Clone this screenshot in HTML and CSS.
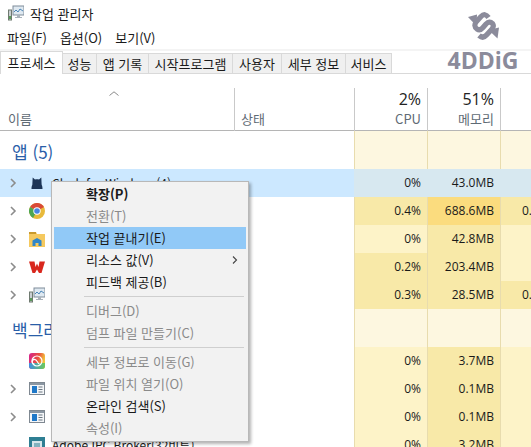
FILE: index.html
```html
<!DOCTYPE html>
<html lang="ko">
<head>
  <meta charset="UTF-8" />
  <meta name="viewport" content="width=device-width, initial-scale=1.0" />
  <title>작업 관리자</title>
  <link rel="stylesheet" href="styles.css">
</head>
<body>
  <svg width="0" height="0" class="defs">
    <symbol id="taskmgr" viewBox="0 0 16 16">
      <rect x="5" y="1" width="11" height="9" fill="#dfe9f1" stroke="#7f8c99"/>
      <path d="M6 7l2-2 2 2 2-3 3 2" fill="none" stroke="#4b86b8"/>
      <path d="M9 10h3v2h2v1H7v-1h2z" fill="#a9b2ba"/>
      <rect x="0.5" y="5" width="3" height="10" fill="#c9ced2" stroke="#6f7a70"/>
      <rect x="1" y="11" width="2" height="3" fill="#5a9a5a"/>
    </symbol>
    <symbol id="winapp" viewBox="0 0 16 14">
      <rect x="0.5" y="0.5" width="15" height="12" fill="#f4f6f8" stroke="#7f8891"/>
      <rect x="1" y="1" width="14" height="2" fill="#8b97a3"/>
      <rect x="3" y="4" width="5" height="7" fill="#1f78c8"/>
      <path d="M9.500 5h4M9.500 7.500h4M9.500 10h4" stroke="#6b7680"/>
    </symbol>
    <symbol id="chevron" viewBox="0 0 8 10">
      <path d="M2 1l4 4-4 4" fill="none" stroke="#8c8c8c" stroke-width="1.600"/>
    </symbol>
  </svg>

  <div class="window">
    <div class="titlebar">
      <svg class="title-icon"><use href="#taskmgr"/></svg>
      <span>작업 관리자</span>
    </div>

    <div class="menubar">
      <span>파일(F)</span>
      <span>옵션(O)</span>
      <span>보기(V)</span>
    </div>

    <div class="tabs">
      <div class="tab active">프로세스</div>
      <div class="tab">성능</div>
      <div class="tab">앱 기록</div>
      <div class="tab">시작프로그램</div>
      <div class="tab">사용자</div>
      <div class="tab">세부 정보</div>
      <div class="tab">서비스</div>
    </div>

    <div class="row head">
      <div class="col name">
        <svg class="sort" viewBox="0 0 10 5"><path d="M0.500 4.500L5 0.800l4.500 3.700" fill="none" stroke="#8a8a8a"/></svg>
        <span class="head-label">이름</span>
      </div>
      <div class="col status"><span class="head-label">상태</span></div>
      <div class="col num"><span class="pct">2%</span><span class="head-label">CPU</span></div>
      <div class="col num"><span class="pct">51%</span><span class="head-label">메모리</span></div>
      <div class="col last"></div>
    </div>

    <div class="row group">
      <div class="col name group-title">앱 (5)</div>
      <div class="col status"></div>
      <div class="col num h0"></div>
      <div class="col num h0"></div>
      <div class="col last h0"></div>
    </div>

    <div class="row item selected">
      <div class="col name">
        <svg class="arrow"><use href="#chevron"/></svg>
        <svg class="icon" viewBox="0 0 16 16"><path d="M2.500 14c0-2 .2-3 .8-4 .2-2 .2-5 .4-7.500L6 4.500c1.300-.3 2.700-.3 4 0l2.300-2c.2 2.500.2 5.500.4 7.500.6 1 .8 2 .8 4z" fill="#1d3557"/></svg>
        <span class="label">Clash for Windows(4)</span>
      </div>
      <div class="col status"></div>
      <div class="col num">0%</div>
      <div class="col num">43.0MB</div>
      <div class="col last"></div>
    </div>

    <div class="row item">
      <div class="col name">
        <svg class="arrow"><use href="#chevron"/></svg>
        <svg class="icon" viewBox="0 0 16 16">
          <circle cx="8" cy="8" r="8" fill="#e8b93a"/>
          <path d="M8 8L1.100 4A8 8 0 0 1 15 4z" fill="#d94a38"/>
          <path d="M8 8l-4 7A8 8 0 0 1 1.100 4z" fill="#4ea651"/>
          <circle cx="8" cy="8" r="3.700" fill="#fff"/>
          <circle cx="8" cy="8" r="2.800" fill="#4a86e0"/>
        </svg>
      </div>
      <div class="col status"></div>
      <div class="col num h2">0.4%</div>
      <div class="col num h4">688.6MB</div>
      <div class="col last h2">0.</div>
    </div>

    <div class="row item">
      <div class="col name">
        <svg class="arrow"><use href="#chevron"/></svg>
        <svg class="icon" viewBox="0 0 16 16">
          <path d="M0 1h7l1 2h8v13H0z" fill="#f5c95f"/>
          <rect y="1" width="7" height="2" fill="#c99a2e"/>
          <path d="M3.500 15V9.500L8 7l4.500 2.500V15h-3v-3h-3v3z" fill="#2f86c9"/>
        </svg>
      </div>
      <div class="col status"></div>
      <div class="col num h1">0%</div>
      <div class="col num h2">42.8MB</div>
      <div class="col last h1"></div>
    </div>

    <div class="row item">
      <div class="col name">
        <svg class="arrow"><use href="#chevron"/></svg>
        <svg class="icon" viewBox="0 0 16 16"><path d="M0 2.500h5.500L6.500 8 8 4.500 9.500 8l1-5.500H16L12.500 14H10L8 10.500 6 14H3.500z" fill="#d9281e"/></svg>
      </div>
      <div class="col status"></div>
      <div class="col num h2">0.2%</div>
      <div class="col num h2">203.4MB</div>
      <div class="col last h1"></div>
    </div>

    <div class="row item">
      <div class="col name">
        <svg class="arrow"><use href="#chevron"/></svg>
        <svg class="icon"><use href="#taskmgr"/></svg>
      </div>
      <div class="col status"></div>
      <div class="col num h2">0.3%</div>
      <div class="col num h2">28.5MB</div>
      <div class="col last h2">0.</div>
    </div>

    <div class="row group">
      <div class="col name group-title">백그라운드 프로세스</div>
      <div class="col status"></div>
      <div class="col num h0"></div>
      <div class="col num h0"></div>
      <div class="col last h0"></div>
    </div>

    <div class="row item">
      <div class="col name">
        <span class="arrow"></span>
        <svg class="icon" viewBox="0 0 16 16">
          <defs>
            <linearGradient id="ccA" x1="0" y1="0" x2="1" y2="0.300">
              <stop offset="0" stop-color="#d4208f"/>
              <stop offset="0.600" stop-color="#e9503f"/>
              <stop offset="1" stop-color="#f2c53a"/>
            </linearGradient>
            <linearGradient id="ccB" x1="0" y1="0" x2="1" y2="0">
              <stop offset="0" stop-color="#3f8ee0"/>
              <stop offset="1" stop-color="#6cc95a"/>
            </linearGradient>
          </defs>
          <rect width="16" height="16" rx="3" fill="url(#ccA)"/>
          <path d="M0 10h16v3a3 3 0 0 1-3 3H3a3 3 0 0 1-3-3z" fill="url(#ccB)"/>
          <circle cx="8" cy="8" r="5" fill="none" stroke="#fff" stroke-width="1.200"/>
          <path d="M5.500 11a2.300 2.300 0 0 1 0-4.600c1.500 0 2.200 1.200 2.700 2.200s1.200 2.400 2.300 2.400" fill="none" stroke="#fff" stroke-width="1.200"/>
        </svg>
      </div>
      <div class="col status"></div>
      <div class="col num h1">0%</div>
      <div class="col num h2">3.7MB</div>
      <div class="col last h1"></div>
    </div>

    <div class="row item">
      <div class="col name">
        <svg class="arrow"><use href="#chevron"/></svg>
        <svg class="icon"><use href="#winapp"/></svg>
      </div>
      <div class="col status"></div>
      <div class="col num h1">0%</div>
      <div class="col num h2">0.1MB</div>
      <div class="col last h1"></div>
    </div>

    <div class="row item">
      <div class="col name">
        <svg class="arrow"><use href="#chevron"/></svg>
        <svg class="icon"><use href="#winapp"/></svg>
      </div>
      <div class="col status"></div>
      <div class="col num h1">0%</div>
      <div class="col num h2">0.1MB</div>
      <div class="col last h1"></div>
    </div>

    <div class="row item">
      <div class="col name">
        <span class="arrow"></span>
        <svg class="icon" viewBox="0 0 16 16">
          <rect width="16" height="16" fill="#2f7f93"/>
          <path d="M3 4h10v9H3z" fill="#d5e6ea"/>
          <path d="M5 7h6M5 9h6M5 11h6" stroke="#2f7f93"/>
        </svg>
        <span class="label">Adobe IPC Broker(32비트)</span>
      </div>
      <div class="col status"></div>
      <div class="col num h1">0%</div>
      <div class="col num h2">3.2MB</div>
      <div class="col last h1"></div>
    </div>
  </div>

  <div class="logo">
    <svg class="logo-mark" viewBox="0 0 32 30">
      <path d="M21.500 6.500Q18 1.500 14 5.500L9.500 10.500Q6 15 10 18Q13 20 16 16.500L19 13Q22.500 9.500 25.500 12.500Q27.500 15.500 24.500 18.500L19.500 24Q16 28 12 24.500" fill="none" stroke="#8b8b9b" stroke-width="5.200"/>
      <path d="M1 6 10 3.500 9.500 15z" fill="#8b8b9b"/>
      <path d="M32 16.500 30.500 27.500 21.500 19z" fill="#8b8b9b"/>
    </svg>
    <div class="logo-text">4DDiG</div>
  </div>

  <div class="menu">
    <div class="menu-item strong">확장(P)</div>
    <div class="menu-item off">전환(T)</div>
    <div class="menu-item hover">작업 끝내기(E)</div>
    <div class="menu-item">리소스 값(V)
      <svg class="submenu" viewBox="0 0 6 8"><path d="M1 .5 4.500 4 1 7.500" fill="none" stroke="#444" stroke-width="1.100"/></svg>
    </div>
    <div class="menu-item">피드백 제공(B)</div>
    <div class="menu-sep"></div>
    <div class="menu-item off">디버그(D)</div>
    <div class="menu-item off">덤프 파일 만들기(C)</div>
    <div class="menu-sep"></div>
    <div class="menu-item off">세부 정보로 이동(G)</div>
    <div class="menu-item off">파일 위치 열기(O)</div>
    <div class="menu-item">온라인 검색(S)</div>
    <div class="menu-item off">속성(I)</div>
  </div>
</body>
</html>
```

FILE: styles.css
```css
html, body {
  margin: 0;
  height: 447px;
  overflow: hidden;
}

body {
  position: relative;
  background: white;
  color: #1a1a1a;
  font-family: "Noto Sans CJK KR", "Open Sans", sans-serif;
  font-size: 13px;
}

.defs {
  position: absolute;
}

.window {
  width: 531px;
  overflow: hidden;
}

.titlebar {
  height: 26px;
  display: flex;
  align-items: center;
  gap: 6px;
  padding-left: 8px;
}

.title-icon {
  width: 16px;
  height: 16px;
}

.menubar {
  height: 25px;
  display: flex;
  align-items: center;
  gap: 13px;
  padding-left: 7px;
  border-bottom: 2px solid #f4f4f4;
  box-sizing: border-box;
}

.tabs {
  height: 22px;
  display: grid;
  grid-template-columns: 63px 34px 52px 84px 49px 64px 46px;
  justify-content: start;
  align-items: end;
  border-bottom: 1px solid #d9d9d9;
}

.tab {
  height: 20px;
  line-height: 20px;
  box-sizing: border-box;
  text-align: center;
  background: #f0f0f0;
  border: 1px solid #d9d9d9;
  border-bottom: none;
  border-left: none;
}

.tab.active {
  height: 23px;
  line-height: 21px;
  background: white;
  border-left: 1px solid #d9d9d9;
  margin-bottom: -1px;
  position: relative;
}

.row {
  display: grid;
  grid-template-columns: 234px 120px 73px 73px 31px;
}

.col {
  box-sizing: border-box;
}

.col.num, .col.last {
  border-left: 1px solid #e8dcae;
}

.col.num {
  text-align: right;
  padding-right: 6px;
  font-family: "Open Sans", sans-serif;
  font-size: 12px;
}

.head {
  height: 57px;
  border-bottom: 1px solid #b5b5b5;
  box-sizing: border-box;
}

.head .col {
  display: flex;
  flex-direction: column;
  justify-content: flex-end;
  padding-bottom: 3px;
  border-left: none;
  position: relative;
}

.head .col.status, .head .col.num, .head .col.last {
  border-left: 1px solid #c9c9c9;
  margin-top: 14px;
}

.head .col.num {
  align-items: flex-end;
}

.head .col.status {
  padding-left: 6px;
}

.head .name {
  padding-left: 8px;
}

.sort {
  position: absolute;
  left: 109px;
  top: 17px;
  width: 10px;
  height: 5px;
}

.head-label {
  color: #5f6b75;
  font-family: "Noto Sans CJK KR", sans-serif;
  font-size: 13px;
  line-height: 18px;
}

.pct {
  font-size: 16px;
  line-height: 22px;
  color: #222;
}

.group {
  height: 38px;
}

.group-title {
  color: #2a5ea8;
  font-size: 17px;
  line-height: 34px;
  padding: 4px 0 0 12px;
  white-space: nowrap;
}

.item {
  height: 28px;
}

.item .col {
  line-height: 28px;
}

.item .name {
  display: flex;
  align-items: center;
  white-space: nowrap;
}

.arrow {
  width: 8px;
  height: 10px;
  margin-left: 9px;
  flex: none;
}

.icon {
  width: 16px;
  height: 16px;
  margin-left: 12px;
  flex: none;
}

.label {
  margin-left: 7px;
  font-size: 12px;
}

.selected {
  background: #cce8ff;
}

.selected .col.num, .selected .col.last {
  background: #d7e8f0;
  border-left-color: #d7e8f0;
}

.h0 { background: #fdf7e0; }
.h1 { background: #fdf3c8; }
.h2 { background: #f8e9a8; }
.h4 { background: #fbdc7e; }

.last {
  padding-left: 21px;
  font-family: "Open Sans", sans-serif;
  font-size: 12px;
}

.logo {
  position: absolute;
  left: 447px;
  top: 11px;
  width: 72px;
  display: flex;
  flex-direction: column;
  align-items: center;
}

.logo-mark {
  width: 32px;
  height: 30px;
}

.logo-text {
  font-family: "Open Sans", sans-serif;
  font-weight: 700;
  font-size: 23px;
  line-height: 24px;
  margin-top: 7px;
  color: #8b8b9b;
}

.menu {
  position: absolute;
  left: 51px;
  top: 181px;
  width: 198px;
  height: 261px;
  box-sizing: border-box;
  padding: 1px 2px;
  background: #f2f2f2;
  border: 1px solid #b8b8b8;
  box-shadow: 2px 2px 3px rgba(0,0,0,0.3);
}

.menu-item {
  height: 22px;
  line-height: 22px;
  padding-left: 32px;
  position: relative;
}

.menu-item.strong {
  font-weight: 700;
}

.menu-item.off {
  color: #8a8a8a;
}

.menu-item.hover {
  background: #91c9f7;
}

.submenu {
  position: absolute;
  right: 8px;
  top: 7px;
  width: 6px;
  height: 8px;
}

.menu-sep {
  height: 1px;
  margin: 3px 2px 3px 30px;
  background: #cfcfcf;
}
```
